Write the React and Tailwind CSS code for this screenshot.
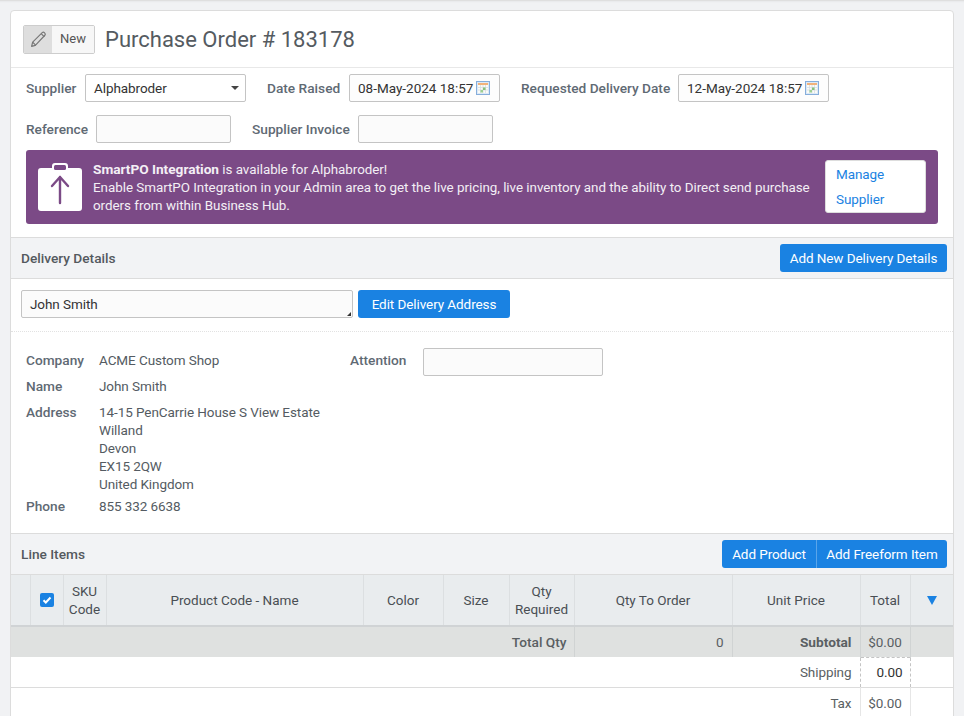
import React from 'react';

const CalendarIcon = () => (
    <svg width="14" height="14" viewBox="0 0 14 14" className="shrink-0">
        <rect x="0.5" y="0.5" width="13" height="13" fill="#dce9f7" stroke="#86aedb" />
        <rect x="2" y="2" width="10" height="2" fill="#f2b27a" />
        <rect x="2" y="4" width="10" height="8" fill="#fbfbf6" />
        <path d="M2 6.500h10M2 9h10M4.500 4v8M7 4v8M9.500 4v8" stroke="#d3dae0" strokeWidth="0.7" />
        <rect x="7" y="6.500" width="2.500" height="2.500" fill="#86c27c" />
        <rect x="4.500" y="9" width="2.500" height="2.500" fill="#9ccf92" />
    </svg>
);

const PencilIcon = () => (
    <svg width="17" height="17" viewBox="0 0 16 16" fill="none" stroke="#777" strokeWidth="1.100" strokeLinejoin="round">
        <path d="M1.500 14.500l1-4L11.500 1.500c.8-.6 1.600-.4 2.200.2s.9 1.500.3 2.300L5 13.500z" />
        <path d="M2.500 10.500l3 3M10.500 2.500l3 3" />
    </svg>
);

const UploadIcon = () => (
    <svg width="44" height="48" viewBox="0 0 44 48" className="shrink-0">
        <path d="M3 5h11V3a3 3 0 0 1 3-3h10a3 3 0 0 1 3 3v2h11a3 3 0 0 1 3 3v37a3 3 0 0 1-3 3H3a3 3 0 0 1-3-3V8a3 3 0 0 1 3-3z" fill="#fff" />
        <rect x="16" y="2" width="12" height="5" rx="1.500" fill="#7b4a86" />
        <path d="M22 40V14M14 23l8-9 8 9" fill="none" stroke="#7b4a86" strokeWidth="2.400" strokeLinecap="round" strokeLinejoin="round" />
    </svg>
);

const DateField = ({ value }) => (
    <div className="w-[151px] h-7 flex items-center justify-between pl-[8px] pr-[9px] border border-[#c4c4c4] rounded-[2px] bg-[#fdfdfd] text-[#333] tracking-normal">
        <span>{value}</span>
        <CalendarIcon />
    </div>
);

const Label = ({ className, children }) => (
    <span className={`text-[13.7px] tracking-normal text-[#5f6a74] font-medium ${className || ''}`}>{children}</span>
);

const TextBox = ({ className }) => (
    <div className={`h-7 border border-[#c4c4c4] rounded-[2px] bg-[#fbfbfb] ${className || ''}`}></div>
);

const AddressRow = ({ label, className, children }) => (
    <div className={`flex ${className || ''}`}>
        <Label className="w-[73px]">{label}</Label>
        <div className="text-[#545b62] leading-[18px]">{children}</div>
    </div>
);

const headCell = 'border-l border-[#dcdfe1] font-normal text-center tracking-normal text-[#4a4f54] leading-[18px] p-0';

const App = () => {
    return (
        <div className="h-[716px] overflow-hidden bg-[#f1f2f4] pt-[10px] pl-[10px] pr-[10px] text-[13.5px] tracking-[-0.08px] leading-[18px] font-['Roboto',sans-serif] shadow-[inset_0_3px_2px_-2px_#d8d8d8]">
            <div className="w-[944px] border border-[#dcdcdc] rounded-[4px] bg-white">
                {/* title */}
                <div className="h-[57px] border-b border-[#e8e8e8] flex items-center pl-[12px]">
                    <div className="flex h-[29px] w-[72px] border border-[#cdcdcd] rounded-[2px] overflow-hidden">
                        <div className="w-[28px] bg-[#dedede] flex items-center justify-center"><PencilIcon /></div>
                        <div className="flex-1 bg-[#f7f7f7] flex items-center justify-center text-[#555] text-[13px] tracking-normal">New</div>
                    </div>
                    <h1 className="ml-[10px] pt-[2px] text-[22px] tracking-normal text-[#555b61] font-normal">Purchase Order # 183178</h1>
                </div>

                {/* supplier form */}
                <div className="pt-[6px] pl-[15px] pr-[15px] pb-[13px]">
                    <div className="flex items-center">
                        <Label className="w-[59px]">Supplier</Label>
                        <div className="w-[161px] h-7 flex items-center justify-between pl-[8px] pr-[6px] border border-[#c4c4c4] rounded-[2px] bg-white text-[#333]">
                            <span>Alphabroder</span>
                            <span className="w-0 h-0 border-x-[4px] border-x-transparent border-t-[4px] border-t-[#444]"></span>
                        </div>
                        <Label className="ml-[21px] w-[82px]">Date Raised</Label>
                        <DateField value="08-May-2024 18:57" />
                        <Label className="ml-[21px] w-[157px]">Requested Delivery Date</Label>
                        <DateField value="12-May-2024 18:57" />
                    </div>
                    <div className="flex items-center mt-[13px]">
                        <Label className="w-[70px]">Reference</Label>
                        <TextBox className="w-[135px]" />
                        <Label className="ml-[21px] w-[106px]">Supplier Invoice</Label>
                        <TextBox className="w-[135px]" />
                    </div>
                    <div className="mt-[7px] h-[74px] bg-[#7b4a86] rounded-[3px] flex items-center pl-[12px] pr-[12px] text-[#f3eff5]">
                        <UploadIcon />
                        <p className="ml-[11px] w-[726px] text-[13.4px] tracking-[-0.03px] leading-[18px] pt-[1px]">
                            <strong className="font-bold text-[13.7px]">SmartPO Integration</strong> is available for Alphabroder!<br />
                            Enable SmartPO Integration in your Admin area to get the live pricing, live inventory and the ability to Direct send purchase orders from within Business Hub.
                        </p>
                        <div className="ml-auto mb-[1px] w-[101px] h-[53px] bg-white border border-[#ddd] rounded-[3px] pl-[10px] pt-[1px] text-[#1a82e2] leading-[25px]">
                            Manage<br />Supplier
                        </div>
                    </div>
                </div>

                {/* delivery */}
                <div className="h-[42px] bg-[#f2f3f5] border-y border-[#dcdcdc] flex items-center justify-between pl-[10px] pr-[6px]">
                    <span className="text-[13.7px] tracking-normal font-medium text-[#54595e]">Delivery Details</span>
                    <button className="h-7 w-[167px] bg-[#1a82e2] rounded-[3px] text-white">Add New Delivery Details</button>
                </div>
                <div className="h-[53px] pb-[2px] border-b border-dotted border-[#e2e2e2] flex items-center pl-[10px] gap-[5px]">
                    <div className="relative w-[332px] h-7 pl-[8px] flex items-center border border-[#c4c4c4] rounded-[2px] bg-[#fbfbfb] text-[#333]">
                        John Smith
                        <span className="absolute right-[1px] bottom-[1px] w-0 h-0 border-l-[4px] border-l-transparent border-b-[4px] border-b-[#333]"></span>
                    </div>
                    <button className="h-7 w-[152px] bg-[#1a82e2] rounded-[3px] text-white">Edit Delivery Address</button>
                </div>
                <div className="h-[201px] pl-[15px] pt-[16px] flex">
                    <div className="w-[324px] pt-[3px]">
                        <AddressRow label="Company">ACME Custom Shop</AddressRow>
                        <AddressRow label="Name" className="mt-[8px]">John Smith</AddressRow>
                        <AddressRow label="Address" className="mt-[8px]">
                            14-15 PenCarrie House S View Estate<br />Willand<br />Devon<br />EX15 2QW<br />United Kingdom
                        </AddressRow>
                        <AddressRow label="Phone" className="mt-[4px]">855 332 6638</AddressRow>
                    </div>
                    <div className="flex items-start">
                        <Label className="w-[73px] mt-[3px]">Attention</Label>
                        <TextBox className="w-[180px]" />
                    </div>
                </div>

                {/* line items */}
                <div className="h-[42px] bg-[#f2f3f5] border-y border-[#dcdcdc] flex items-center justify-between pl-[10px] pr-[6px]">
                    <span className="text-[13.7px] tracking-normal font-medium text-[#54595e]">Line Items</span>
                    <div className="flex h-7 bg-[#1a82e2] rounded-[3px] text-white">
                        <button className="w-[94px]">Add Product</button>
                        <button className="w-[131px] border-l border-[#5aa5ea]">Add Freeform Item</button>
                    </div>
                </div>
                <table className="w-[942px] table-fixed border-collapse">
                    <colgroup>
                        <col className="w-[19px]" />
                        <col className="w-[33px]" />
                        <col className="w-[43px]" />
                        <col className="w-[257px]" />
                        <col className="w-[80px]" />
                        <col className="w-[66px]" />
                        <col className="w-[65px]" />
                        <col className="w-[158px]" />
                        <col className="w-[128px]" />
                        <col className="w-[50px]" />
                        <col className="w-[43px]" />
                    </colgroup>
                    <thead>
                        <tr className="h-[51px] bg-[#e9ecee] border-b-2 border-[#d0d3d5]">
                            <th className="p-0"></th>
                            <th className={headCell}>
                                <span className="mx-auto flex w-[14px] h-[14px] items-center justify-center bg-[#1a82e2] rounded-[2px]">
                                    <svg width="10" height="10" viewBox="0 0 10 10" fill="none" stroke="#fff" strokeWidth="2"><path d="M1.500 5.200l2.300 2.300 4.700-5" /></svg>
                                </span>
                            </th>
                            <th className={headCell}>SKU<br />Code</th>
                            <th className={headCell}>Product Code - Name</th>
                            <th className={headCell}>Color</th>
                            <th className={headCell}>Size</th>
                            <th className={headCell}>Qty<br />Required</th>
                            <th className={headCell}>Qty To Order</th>
                            <th className={headCell}>Unit Price</th>
                            <th className={headCell}>Total</th>
                            <th className={headCell}>
                                <span className="inline-block w-0 h-0 border-x-[5px] border-x-transparent border-t-[9px] border-t-[#1a82e2]"></span>
                            </th>
                        </tr>
                    </thead>
                    <tbody>
                        <tr className="h-[31px] bg-[#dfe1e0] text-[#5a5f63]">
                            <td colSpan="7" className="text-right pr-[7px] text-[13.7px] tracking-normal font-medium">Total Qty</td>
                            <td className="border-l border-[#d0d3d3] text-right pr-[8px]">0</td>
                            <td className="border-l border-[#d0d3d3] text-right pr-[8px] text-[13.7px] tracking-normal font-bold">Subtotal</td>
                            <td className="border-l border-[#d0d3d3] text-center">$0.00</td>
                            <td className="border-l border-[#d0d3d3]"></td>
                        </tr>
                        <tr className="h-[30px] border-b border-[#dcdcdc] text-[#5a5f63]">
                            <td colSpan="9" className="text-right pr-[8px]">Shipping</td>
                            <td className="border border-dashed border-[#c4c4c4] text-right pr-[7px] text-[#333]">0.00</td>
                            <td></td>
                        </tr>
                        <tr className="h-[32px] text-[#5a5f63]">
                            <td colSpan="9" className="text-right pr-[8px]">Tax</td>
                            <td className="border-x border-[#e6e6e6] text-center">$0.00</td>
                            <td></td>
                        </tr>
                    </tbody>
                </table>
            </div>
        </div>
    );
};

export default App;
